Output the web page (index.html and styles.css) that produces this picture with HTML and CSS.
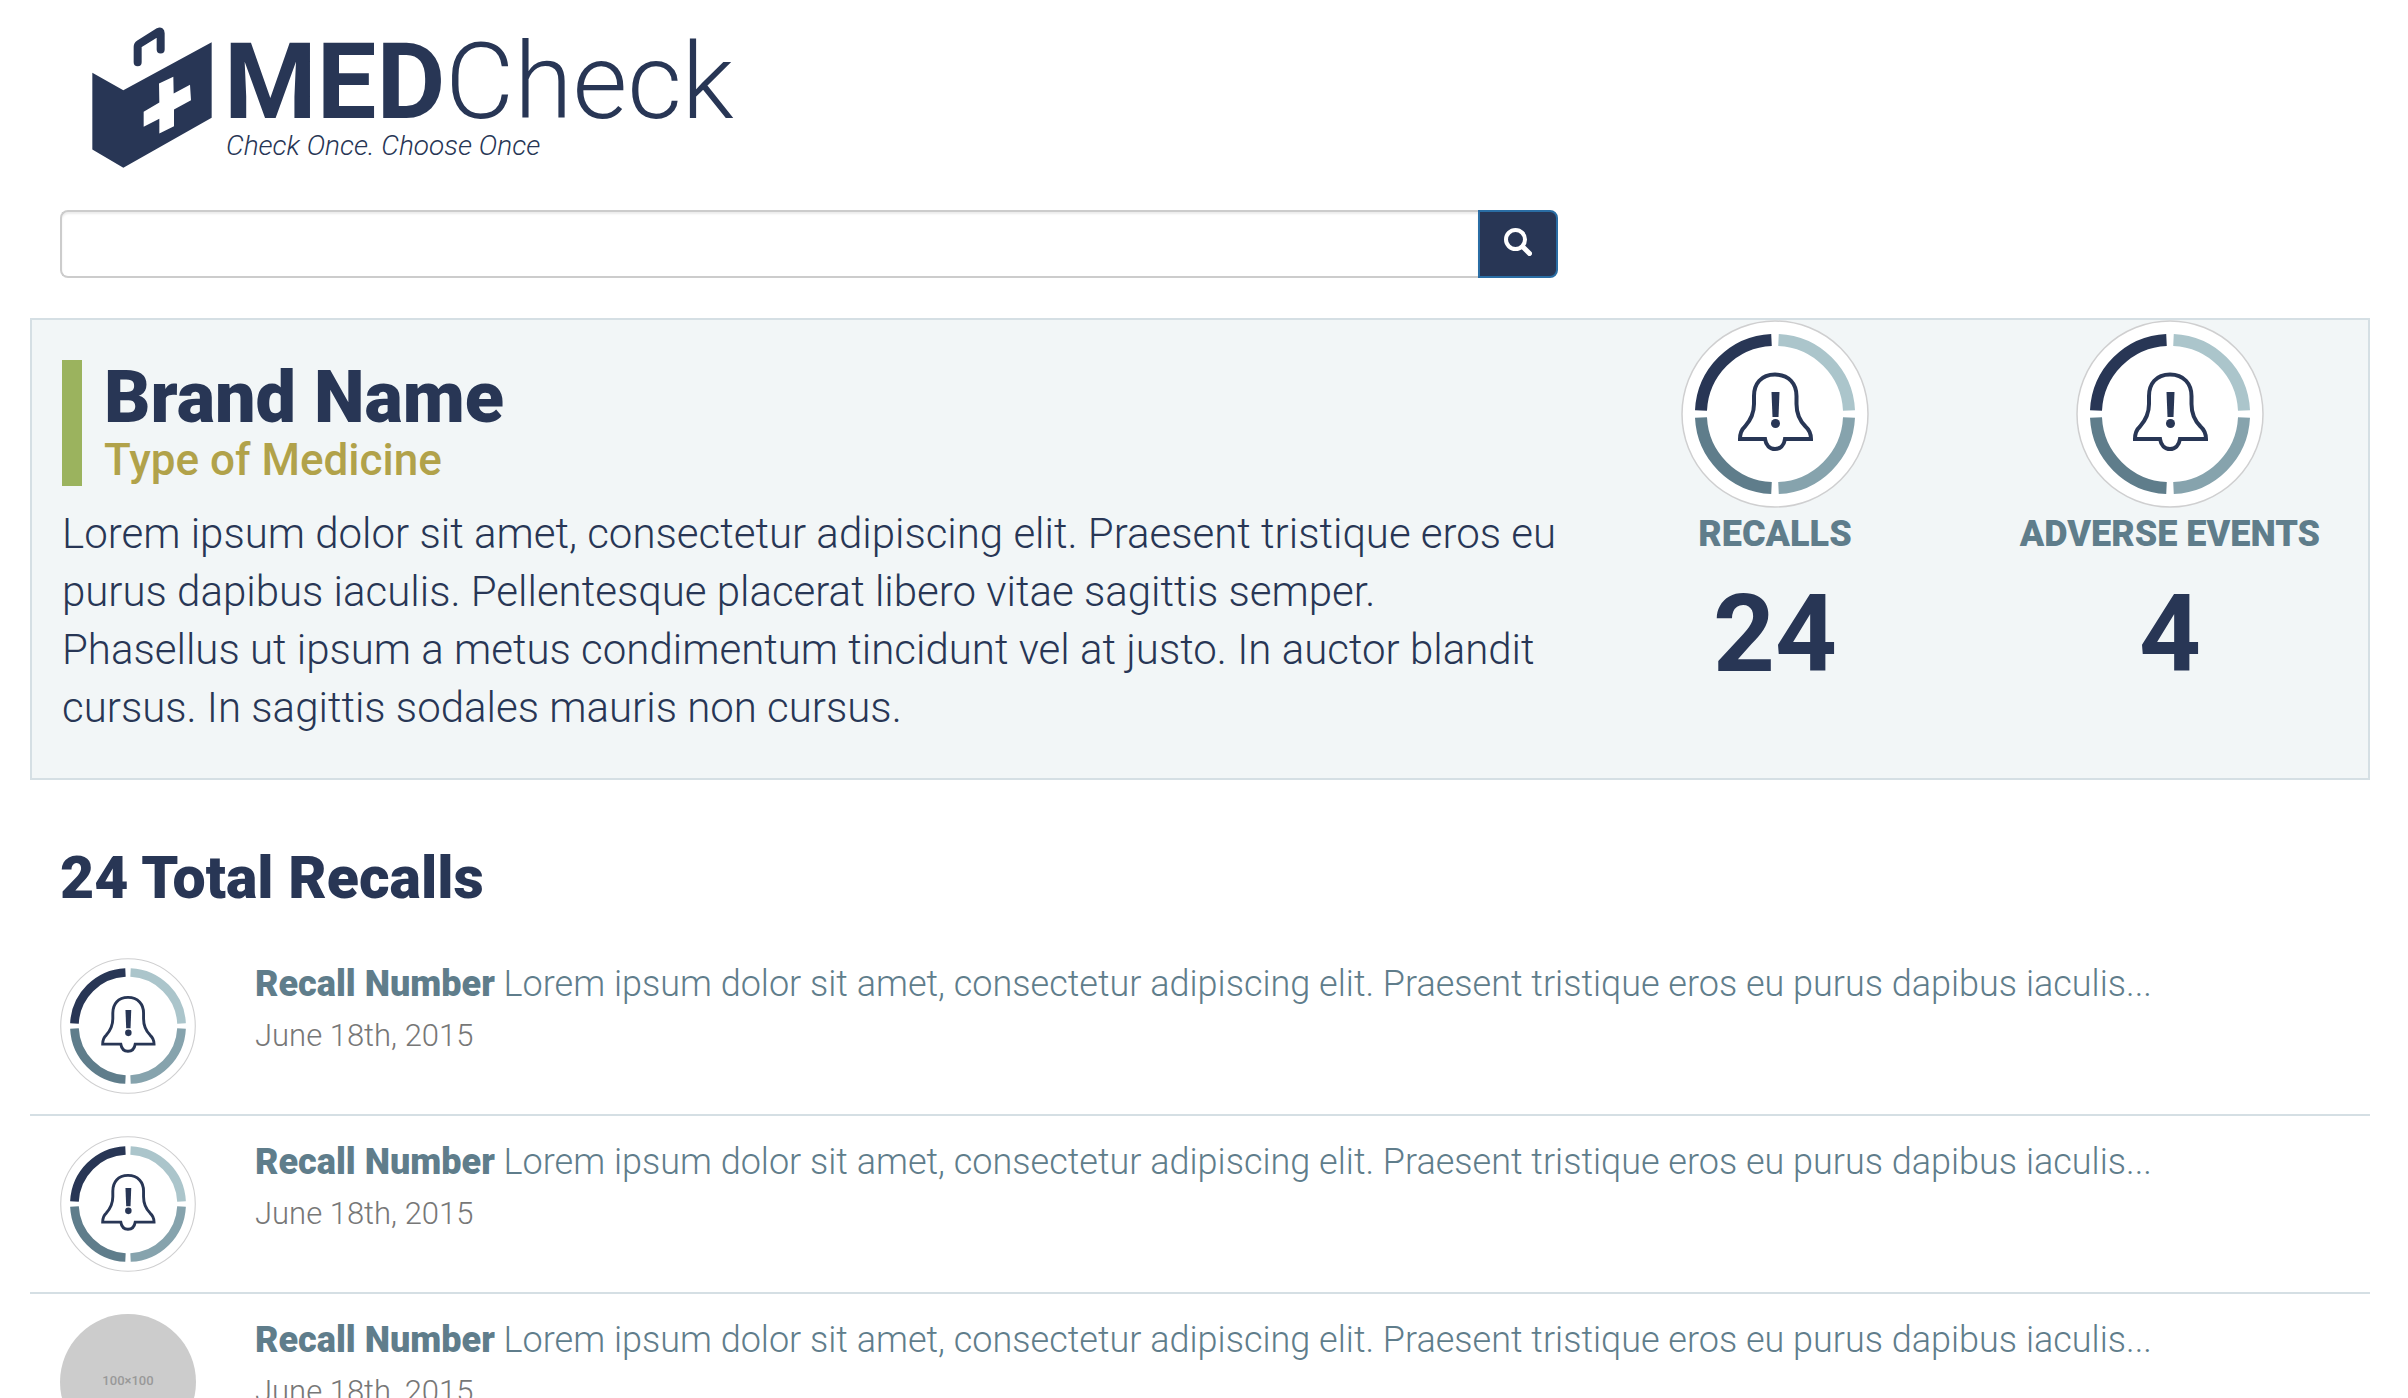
FILE: index.html
```html
<!DOCTYPE html>
<html lang="en">
<head>
<meta charset="utf-8">
<title>MEDCheck</title>
<link rel="stylesheet" href="styles.css">
</head>
<body>
<svg class="sprite" aria-hidden="true">
  <symbol id="alert" viewBox="0 0 188 188">
    <circle cx="94" cy="94" r="93" fill="#fff" stroke="#cfcfd0" stroke-width="1.5"/>
    <g fill="none" stroke-width="12">
      <path d="M20 90.5A74 74 0 0 1 90.5 20" stroke="#283655"/>
      <path d="M97.500 20A74 74 0 0 1 168 90.500" stroke="#abc5cb"/>
      <path d="M168 97.500A74 74 0 0 1 97.500 168" stroke="#86a3ad"/>
      <path d="M90.500 168A74 74 0 0 1 20 97.500" stroke="#5f7d8b"/>
    </g>
    <path d="M94 54.500C80 54.500 73 64 73 76V84C73 95 68 102 64 106.500C60 110 59 113 59 119H84C85 125.500 89 129 94 129S103 125.500 104 119H130C130 113 128.500 110 124.500 106.500C120 102 115.500 95 115.500 84V76C115.500 64 108 54.500 94 54.500Z" fill="none" stroke="#283655" stroke-width="4"/>
    <path d="M90.500 72H98.500L97.500 97H91.500Z" fill="#283655"/>
    <circle cx="94.500" cy="103.500" r="4.500" fill="#283655"/>
  </symbol>
</svg>
<div class="container">
  <header class="header">
    <a class="logo" href="#">
      <svg class="logo-mark" viewBox="36 18 360 428" aria-hidden="true">
        <path d="M37 158L130 210L395 66V293L130 443L37 388Z" fill="#283655"/>
        <path d="M237 190L280 170L281 220L330 194L333 240L282 268V318L238 340V296L191 320V275L238 247Z" fill="#fff"/>
        <path d="M173 126V80Q173 74 178 71L236 35Q242 32 242 39V88" fill="none" stroke="#283655" stroke-width="24" stroke-linecap="round"/>
      </svg>
      <span class="logo-text">
        <span class="logo-name"><b>MED</b>Check</span>
        <span class="logo-tag">Check Once. Choose Once</span>
      </span>
    </a>
    <form class="search">
      <input class="search-input" type="text" aria-label="Search medicines">
      <button class="search-button" type="submit" aria-label="Search">
        <svg class="search-icon" viewBox="0 0 28 28" aria-hidden="true">
          <circle cx="11.500" cy="11.500" r="9.500" fill="none" stroke="#fff" stroke-width="4"/>
          <path d="M19 19L25.500 25.500" stroke="#fff" stroke-width="5" stroke-linecap="round"/>
        </svg>
      </button>
    </form>
  </header>

  <section class="summary">
    <div class="summary-main">
      <div class="brand">
        <h1 class="brand-name">Brand Name</h1>
        <p class="brand-type">Type of Medicine</p>
      </div>
      <p class="summary-text">Lorem ipsum dolor sit amet, consectetur adipiscing elit. Praesent tristique eros eu purus dapibus iaculis. Pellentesque placerat libero vitae sagittis semper. Phasellus ut ipsum a metus condimentum tincidunt vel at justo. In auctor blandit cursus. In sagittis sodales mauris non cursus.</p>
    </div>
    <div class="stat">
      <svg class="stat-icon" aria-hidden="true"><use href="#alert"/></svg>
      <h2 class="stat-label">RECALLS</h2>
      <p class="stat-value">24</p>
    </div>
    <div class="stat">
      <svg class="stat-icon" aria-hidden="true"><use href="#alert"/></svg>
      <h2 class="stat-label">ADVERSE EVENTS</h2>
      <p class="stat-value">4</p>
    </div>
  </section>

  <section class="recalls">
    <h2 class="recalls-title">24 Total Recalls</h2>
    <ul class="recall-list">
      <li class="recall">
        <svg class="recall-icon" aria-hidden="true"><use href="#alert"/></svg>
        <div class="recall-body">
          <a class="recall-link" href="#"><strong>Recall Number</strong> Lorem ipsum dolor sit amet, consectetur adipiscing elit. Praesent tristique eros eu purus dapibus iaculis...</a>
          <p class="recall-date">June 18th, 2015</p>
        </div>
      </li>
      <li class="recall">
        <svg class="recall-icon" aria-hidden="true"><use href="#alert"/></svg>
        <div class="recall-body">
          <a class="recall-link" href="#"><strong>Recall Number</strong> Lorem ipsum dolor sit amet, consectetur adipiscing elit. Praesent tristique eros eu purus dapibus iaculis...</a>
          <p class="recall-date">June 18th, 2015</p>
        </div>
      </li>
      <li class="recall">
        <div class="recall-icon placeholder">100×100</div>
        <div class="recall-body">
          <a class="recall-link" href="#"><strong>Recall Number</strong> Lorem ipsum dolor sit amet, consectetur adipiscing elit. Praesent tristique eros eu purus dapibus iaculis...</a>
          <p class="recall-date">June 18th, 2015</p>
        </div>
      </li>
    </ul>
  </section>
</div>
</body>
</html>
```
FILE: styles.css
```css
* {
  box-sizing: border-box;
}

html {
  scrollbar-width: none;
}

body {
  margin: 0;
  background: #fff;
  color: #283655;
  font-family: Roboto, "Liberation Sans", sans-serif;
  font-weight: 300;
}

h1, h2, p, ul {
  margin: 0;
  padding: 0;
}

.sprite {
  display: none;
}

.container {
  margin: 0 38px 0 30px;
}

.header {
  padding: 26px 30px 40px;
}

.logo {
  display: flex;
  gap: 12px;
  margin-left: 32px;
  height: 184px;
  color: inherit;
  text-decoration: none;
}

.logo-mark {
  width: 120px;
  height: 143px;
}

.logo-text {
  display: flex;
  flex-direction: column;
  padding-top: 4px;
}

.logo-name {
  font-size: 106px;
  line-height: 104px;
}

.logo-name b {
  font-weight: 700;
}

.logo-tag {
  padding-left: 2px;
  font-size: 28px;
  line-height: 24px;
  font-style: italic;
}

.search {
  display: flex;
  width: 1498px;
  max-width: 100%;
  height: 68px;
}

.search-input {
  flex: 1;
  min-width: 0;
  padding: 12px 24px;
  border: 2px solid #ccc;
  border-right: 0;
  border-radius: 8px 0 0 8px;
  box-shadow: inset 0 2px 2px rgba(0, 0, 0, 0.075);
  font: inherit;
  font-size: 28px;
}

.search-button {
  display: flex;
  align-items: center;
  justify-content: center;
  width: 80px;
  padding: 0 0 4px;
  border: 2px solid #2a6da4;
  border-radius: 0 8px 8px 0;
  background: #283655;
}

.search-icon {
  width: 28px;
  height: 28px;
}

.summary {
  display: grid;
  grid-template-columns: minmax(0, 1fr) 394px 396px;
  border: 2px solid #d5dfe4;
  background: #f2f6f7;
}

.summary-main {
  padding: 40px 16px 41px 30px;
}

.brand {
  padding: 1px 0 1px 22px;
  border-left: 20px solid #9bb35e;
}

.brand-name {
  font-size: 72px;
  line-height: 74px;
  font-weight: 900;
}

.brand-type {
  color: #b1a24a;
  font-size: 44px;
  line-height: 50px;
  font-weight: 500;
}

.summary-text {
  margin-top: 19px;
  font-size: 42px;
  line-height: 58px;
}

.stat {
  display: flex;
  flex-direction: column;
  align-items: center;
}

.stat-icon {
  width: 188px;
  height: 188px;
}

.stat-label {
  margin-top: 4px;
  color: #5f7d8b;
  font-size: 36px;
  line-height: 44px;
  font-weight: 900;
}

.stat-value {
  margin-top: 18px;
  font-size: 108px;
  line-height: 120px;
  font-weight: 700;
}

.recalls-title {
  padding: 60px 30px 22px;
  font-size: 59px;
  line-height: 76px;
  font-weight: 900;
}

.recall-list {
  list-style: none;
}

.recall {
  display: flex;
  gap: 59px;
  padding: 20px 30px;
  border-bottom: 2px solid #d5dfe4;
}

.recall-icon {
  flex: none;
  width: 136px;
  height: 136px;
}

.placeholder {
  display: flex;
  align-items: center;
  justify-content: center;
  padding-bottom: 4px;
  border-radius: 50%;
  background: #ccc;
  color: #999;
  font-size: 13px;
  font-weight: 500;
}

.recall-link {
  display: block;
  color: #5f7d8b;
  font-size: 36px;
  line-height: 52px;
  text-decoration: none;
}

.recall-link strong {
  font-weight: 900;
}

.recall-date {
  color: #777;
  font-size: 31px;
  line-height: 52px;
}
```
